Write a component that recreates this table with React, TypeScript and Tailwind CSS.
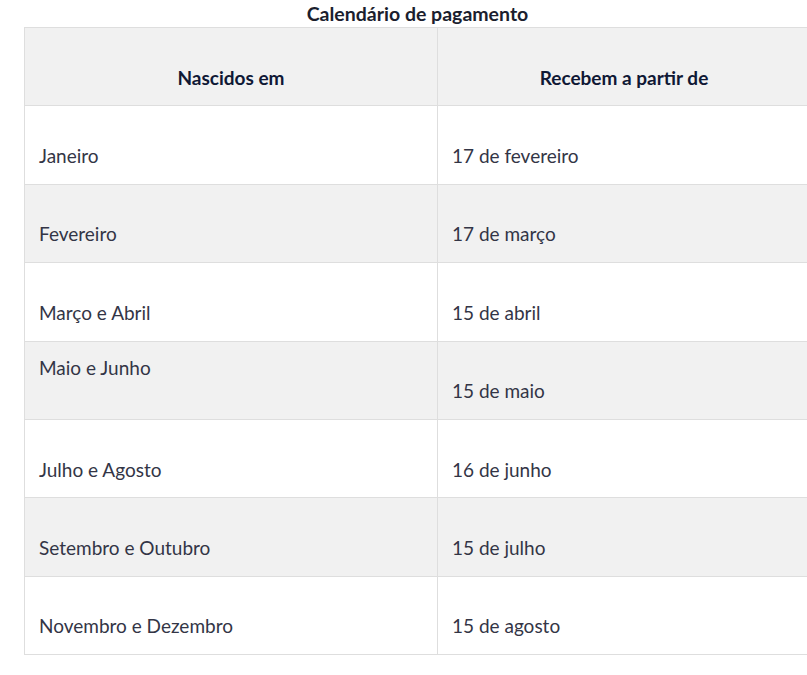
const ROWS: [string, string, "top" | "bottom"][] = [
  ["Janeiro", "17 de fevereiro", "bottom"],
  ["Fevereiro", "17 de março", "bottom"],
  ["Março e Abril", "15 de abril", "bottom"],
  ["Maio e Junho", "15 de maio", "top"],
  ["Julho e Agosto", "16 de junho", "bottom"],
  ["Setembro e Outubro", "15 de julho", "bottom"],
  ["Novembro e Dezembro", "15 de agosto", "bottom"],
];

function Cell({ text, top }: { text: string; top?: boolean }) {
  return (
    <td className="h-[78.4px] border border-[#dedede] px-[14px] align-middle">
      {top ? (
        <>
          <p className="leading-[24px]">{text}</p>
          <p className="leading-[24px]">&nbsp;</p>
        </>
      ) : (
        <>
          <p className="leading-[21px]">&nbsp;</p>
          <p className="leading-[21px]">{text}</p>
        </>
      )}
    </td>
  );
}

export default function App() {
  return (
    <div
      className="w-full overflow-hidden bg-white pb-[20px]"
      style={{ fontFamily: "Lato, 'Noto Sans', sans-serif" }}
    >
      <div className="pl-[24px]">
        <table className="w-[787px] table-fixed border-collapse text-[19px] text-[#333546]">
          <caption className="h-[27px] pt-[2px] text-[19.5px] font-bold leading-[24px] text-[#1b1e2e]">
            Calendário de pagamento
          </caption>
          <colgroup>
            <col className="w-[413px]" />
            <col />
          </colgroup>
          <thead>
            <tr className="bg-[#f1f1f1]">
              <th className="h-[78.4px] border border-[#dedede] px-[14px] text-center align-middle font-bold text-[#0f1835]">
                <p className="leading-[21px]">&nbsp;</p>
                <p className="leading-[21px]">Nascidos em</p>
              </th>
              <th className="h-[78.4px] border border-[#dedede] px-[14px] text-center align-middle font-bold text-[#0f1835]">
                <p className="leading-[21px]">&nbsp;</p>
                <p className="leading-[21px]">Recebem a partir de</p>
              </th>
            </tr>
          </thead>
          <tbody>
            {ROWS.map(([a, b, pos], i) => (
              <tr key={a} className={i % 2 === 1 ? "bg-[#f1f1f1]" : "bg-white"}>
                <Cell text={a} top={pos === "top"} />
                <Cell text={b} />
              </tr>
            ))}
          </tbody>
        </table>
      </div>
    </div>
  );
}
